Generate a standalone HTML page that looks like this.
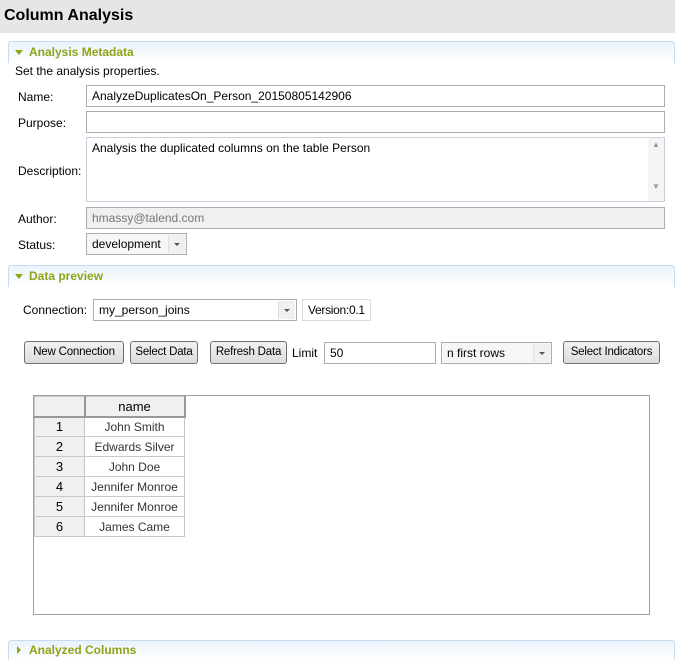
<!DOCTYPE html>
<html><head><style>
*{margin:0;padding:0;box-sizing:border-box}
body{width:675px;height:655px;overflow:hidden;background:#fff;font-family:"Liberation Sans",sans-serif;font-size:12px;color:#000;position:relative}
.a{position:absolute}
.inp{position:absolute;border:1px solid #abadb3;background:#fff;height:22px;padding:3px 5px;white-space:nowrap}
.sec{position:absolute;left:8px;right:0;height:22px;border:1px solid #c7dcef;border-bottom:none;border-radius:3px 3px 0 0;background:linear-gradient(#e9f2fb,#fff);color:#8fa516;font-weight:bold;padding:3px 0 0 20px}
.tri{position:absolute;left:6px;top:8px;width:0;height:0;border-left:4px solid transparent;border-right:4px solid transparent;border-top:5px solid #8fa516}
.btn{position:absolute;height:23px;border:1px solid #707070;border-radius:3px;background:linear-gradient(#f2f2f2,#dcdcdc);padding:4px 0 0;text-align:center;font-size:11.5px;white-space:nowrap;letter-spacing:-0.2px}
.dd{position:absolute;right:1px;top:1px;bottom:1px;width:17px;background:#f0f0f0;border-left:1px solid #e0e0e0}
.dd:after{content:"";position:absolute;left:5px;top:8px;border-left:3px solid transparent;border-right:3px solid transparent;border-top:3px solid #555}
td{border:1px solid #c8c8c8;height:20px;text-align:center;padding:0;font-size:12px;color:#333}
</style></head><body>
<div class="a" style="left:0;top:0;width:675px;height:33px;background:#e6e6e6"></div>
<div class="a" style="left:4px;top:7px;font-size:16px;font-weight:bold">Column Analysis</div>

<div class="sec" style="top:41px"><div class="tri"></div>Analysis Metadata</div>
<div class="a" style="left:15px;top:64px">Set the analysis properties.</div>
<div class="a" style="left:18px;top:90px">Name:</div>
<div class="inp" style="left:86px;top:85px;width:579px">AnalyzeDuplicatesOn_Person_20150805142906</div>
<div class="a" style="left:18px;top:116px">Purpose:</div>
<div class="inp" style="left:86px;top:111px;width:579px"></div>
<div class="a" style="left:18px;top:164px">Description:</div>
<div class="inp" style="left:86px;top:137px;width:579px;height:65px;border-color:#c8d0dc">Analysis the duplicated columns on the table Person
<div class="a" style="right:0;top:0;bottom:0;width:16px;background:#f4f4f4;color:#999;font-size:8px;text-align:center;line-height:14px">▲<br><br><br>▼</div></div>
<div class="a" style="left:18px;top:212px">Author:</div>
<div class="inp" style="left:86px;top:207px;width:579px;background:#f0f0f0;color:#777">hmassy@talend.com</div>
<div class="a" style="left:18px;top:238px">Status:</div>
<div class="inp" style="left:86px;top:233px;width:101px;background:#f6f6f6">development<div class="dd"></div></div>

<div class="sec" style="top:265px"><div class="tri"></div>Data preview</div>
<div class="a" style="left:23px;top:303px">Connection:</div>
<div class="inp" style="left:93px;top:299px;width:204px">my_person_joins<div class="dd"></div></div>
<div class="inp" style="left:302px;top:299px;width:69px;border-color:#ddd;letter-spacing:-0.3px">Version:0.1</div>

<div class="btn" style="left:24px;top:341px;width:100px">New Connection</div>
<div class="btn" style="left:130px;top:341px;width:68px">Select Data</div>
<div class="btn" style="left:210px;top:341px;width:77px">Refresh Data</div>
<div class="a" style="left:292px;top:346px">Limit</div>
<div class="inp" style="left:324px;top:342px;width:112px">50</div>
<div class="inp" style="left:441px;top:342px;width:111px;background:#f6f6f6">n first rows<div class="dd"></div></div>
<div class="btn" style="left:563px;top:341px;width:97px">Select Indicators</div>

<div class="a" style="left:33px;top:395px;width:617px;height:220px;border:1px solid #a0a0a0"></div>
<table class="a" style="left:34px;top:396px;border-collapse:collapse">
<tr><td style="width:50px;background:#f0f0f0;border-right:2px solid #999;border-bottom:2px solid #999"></td><td style="width:100px;background:#f0f0f0;color:#000;font-size:13px;border-right:2px solid #999;border-bottom:2px solid #999">name</td></tr>
<tr><td style="background:#f0f0f0;color:#000;font-size:13px">1</td><td>John Smith</td></tr>
<tr><td style="background:#f0f0f0;color:#000;font-size:13px">2</td><td>Edwards Silver</td></tr>
<tr><td style="background:#f0f0f0;color:#000;font-size:13px">3</td><td>John Doe</td></tr>
<tr><td style="background:#f0f0f0;color:#000;font-size:13px">4</td><td>Jennifer Monroe</td></tr>
<tr><td style="background:#f0f0f0;color:#000;font-size:13px">5</td><td>Jennifer Monroe</td></tr>
<tr><td style="background:#f0f0f0;color:#000;font-size:13px">6</td><td>James Came</td></tr>
</table>

<div class="sec" style="top:640px;height:20px;padding-top:2px"><div style="position:absolute;left:8px;top:5px;border-top:4px solid transparent;border-bottom:4px solid transparent;border-left:4px solid #8fa516"></div>Analyzed Columns</div>
</body></html>
